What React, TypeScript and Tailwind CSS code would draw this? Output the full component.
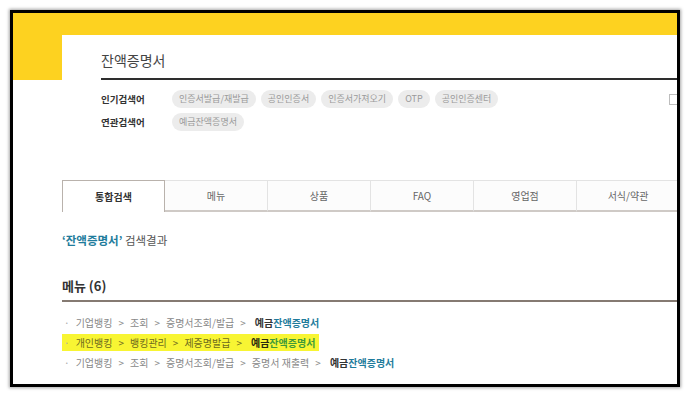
import React from 'react';

const popular = ['인증서발급/재발급', '공인인증서', '인증서가져오기', 'OTP', '공인인증센터'];
const related = ['예금잔액증명서'];
const tabs = ['통합검색', '메뉴', '상품', 'FAQ', '영업점', '서식/약관'];

const rows = [
  { path: ['기업뱅킹', '조회', '증명서조회/발급'], hl: false },
  { path: ['개인뱅킹', '뱅킹관리', '제증명발급'], hl: true },
  { path: ['기업뱅킹', '조회', '증명서조회/발급', '증명서 재출력'], hl: false },
];

const font = { fontFamily: '"Noto Sans CJK KR", "Noto Sans", sans-serif' };

const Chip: React.FC<{ label: string }> = ({ label }) => (
  <span className="h-[18px] px-[7px] flex items-center rounded-full bg-[#ececec] text-[#9a9a9a] text-[9px]">
    {label}
  </span>
);

const KeywordRow: React.FC<{ title: string; items: string[]; box?: boolean }> = ({ title, items, box }) => (
  <div className="flex items-center h-[18px]">
    <span className="w-[71px] shrink-0 text-[9.5px] font-bold text-[#333]">{title}</span>
    <div className="flex items-center gap-[5px]">
      {items.map((k) => (
        <Chip key={k} label={k} />
      ))}
    </div>
    {box && <span className="ml-auto mr-[2px] w-[11px] h-[11px] border border-[#bdbdbd] bg-white" />}
  </div>
);

export default function App() {
  return (
    <div className="w-[686px] h-[397px] bg-white pt-[10px] pl-[10px]" style={font}>
      <div className="w-[670px] h-[377px] border-[3px] border-black overflow-hidden bg-white shadow-[0_0_3px_1px_rgba(0,0,0,0.35)]">
        {/* yellow top band */}
        <div className="h-[22px] bg-[#fdd220]" />
        <div className="flex">
          <div className="w-[49px] shrink-0">
            <div className="h-[45px] bg-[#fdd220]" />
          </div>

          <div className="w-[620px] shrink-0">
            {/* Search header */}
            <div className="pl-[39px]">
              <div className="pt-[15px] pb-[8px] border-b-2 border-[#2e2e2e] text-[14px] leading-[20px] text-[#444]">
                잔액증명서
              </div>
              <div className="mt-[10px] flex flex-col gap-[5px]">
                <KeywordRow title="인기검색어" items={popular} box />
                <KeywordRow title="연관검색어" items={related} />
              </div>
            </div>

            {/* Tabs */}
            <div className="mt-[49px] flex">
              {tabs.map((t, i) =>
                i === 0 ? (
                  <div
                    key={t}
                    className="w-[103px] h-[32px] shrink-0 flex items-center justify-center border-t border-l border-r border-[#b9b2ac] bg-white text-[10px] font-bold text-[#333]"
                  >
                    {t}
                  </div>
                ) : (
                  <div
                    key={t}
                    className="w-[103px] h-[32px] shrink-0 flex items-center justify-center border-t border-r border-[#e3e3e3] border-b-2 border-b-[#cfcac6] bg-[#fcfcfc] text-[10px] text-[#666]"
                  >
                    {t}
                  </div>
                )
              )}
            </div>

            <div className="mt-[20px] text-[11.5px] leading-[16px] text-[#555]">
              <span className="font-bold text-[#1f7c9c]">‘잔액증명서’</span> 검색결과
            </div>

            <div className="mt-[29px] pb-[5px] border-b-2 border-[#857a72] text-[13px] leading-[18px] font-semibold text-[#333]">
              메뉴 (6)
            </div>

            <div className="mt-[10px] flex flex-col">
              {rows.map((r, idx) => (
                <div key={idx} className="h-[20px] flex items-center">
                  <div
                    className={`flex items-center h-[17px] pl-[2px] pr-[4px] text-[10px] ${
                      r.hl ? 'bg-[#f8f533] text-[#6d6a1e]' : 'text-[#888]'
                    }`}
                  >
                    <span className="mr-[6px] text-[#aaa]">·</span>
                    {r.path.map((p) => (
                      <React.Fragment key={p}>
                        <span>{p}</span>
                        <span className="px-[6px]">&gt;</span>
                      </React.Fragment>
                    ))}
                    <span className="ml-[3px] font-bold">
                      <span className={r.hl ? 'text-[#2a2a10]' : 'text-[#333]'}>예금</span>
                      <span className={r.hl ? 'text-[#3e9a3a]' : 'text-[#1f7c9c]'}>잔액증명서</span>
                    </span>
                  </div>
                </div>
              ))}
            </div>
          </div>
        </div>
      </div>
    </div>
  );
}
